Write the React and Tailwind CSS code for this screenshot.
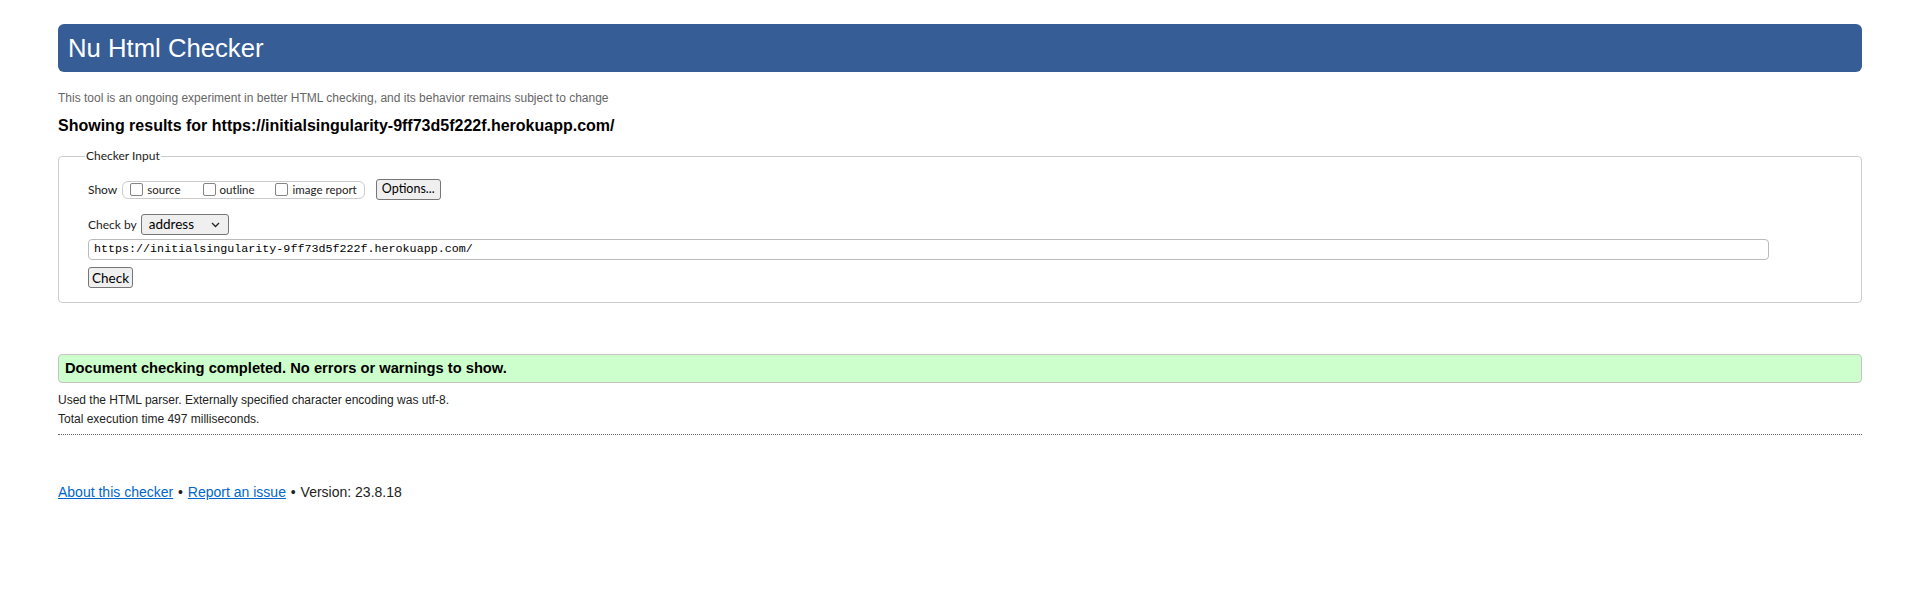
const sans = "font-['Liberation_Sans',Arial,sans-serif]";
const ui = "font-['Lato','Noto_Sans',sans-serif]";

function Box() {
  return <span className="inline-block w-[13px] h-[13px] border border-[#858585] rounded-[2px] bg-white" />;
}

function Sep() {
  return <span className="mx-[1px]">{" • "}</span>;
}

export default function App() {
  return (
    <div className={`px-[58px] pt-[24px] bg-white text-black ${sans}`}>
      <h1 className="h-[48px] bg-[#365d96] rounded-[6px] text-white text-[25.7px] pl-[10px] flex items-center">
        Nu Html Checker
      </h1>
      <p className="mt-[19px] text-[12px] leading-[14px] text-[#666]">
        This tool is an ongoing experiment in better HTML checking, and its behavior remains subject to change
      </p>
      <h2 className="mt-[11px] text-[16px] leading-[20px] font-bold">
        Showing results for https://initialsingularity-9ff73d5f222f.herokuapp.com/
      </h2>
      <fieldset className="mt-[12px] border border-[#ccc] rounded-[4px] px-[29px] pt-[15px] pb-[12px]">
        <legend className={`ml-[-3px] px-[1px] text-[12px] leading-[16px] text-[#222] ${ui}`}>Checker Input</legend>
        <div className={`flex items-center h-[21px] text-[12px] text-[#222] ${ui}`}>
          <span>Show</span>
          <div className="ml-[5px] h-[18px] flex items-center border border-[#ccc] rounded-[6px] pl-[7px] pr-[7px] text-[11.5px]">
            <Box />
            <span className="ml-[4px]">source</span>
            <span className="ml-[22px] flex"><Box /></span>
            <span className="ml-[4px]">outline</span>
            <span className="ml-[20px] flex"><Box /></span>
            <span className="ml-[5px]">image report</span>
          </div>
          <button className="ml-[11px] h-[21px] w-[65px] bg-[#efefef] border border-[#767676] rounded-[3px] text-[12.5px] text-black">
            Options...
          </button>
        </div>
        <div className={`mt-[14px] flex items-center h-[21px] text-[12px] text-[#222] ${ui}`}>
          <span>Check by</span>
          <div className="ml-[4px] h-[21px] w-[88px] flex items-center justify-between bg-[#efefef] border border-[#767676] rounded-[3px] pl-[7px] pr-[8px] text-[13.5px] text-black">
            <span>address</span>
            <svg width="9" height="6" viewBox="0 0 9 6" fill="none" stroke="#222" strokeWidth="1.3">
              <path d="M1 1l3.5 3.5L8 1" />
            </svg>
          </div>
        </div>
        <div className="mt-[4px] h-[21px] w-[1681px] flex items-center border border-[#bbb] rounded-[4px] px-[5px] font-['Liberation_Mono',monospace] text-[11.7px] text-black">
          https://initialsingularity-9ff73d5f222f.herokuapp.com/
        </div>
        <button className={`mt-[7px] h-[21px] w-[45px] bg-[#efefef] border border-[#767676] rounded-[3px] text-[13.5px] text-black ${ui}`}>
          Check
        </button>
      </fieldset>
      <div className="mt-[51px] h-[29px] flex items-center bg-[#ccffcc] border border-[#c4c4c4] rounded-[4px] pl-[6px] text-[14.7px] font-bold">
        Document checking completed. No errors or warnings to show.
      </div>
      <div className="border-b border-dotted border-[#666] pb-[6px] text-[12px] text-[#222]">
        <p className="mt-[8px] leading-[18px]">Used the HTML parser. Externally specified character encoding was utf-8.</p>
        <p className="mt-[1px] leading-[18px]">Total execution time 497 milliseconds.</p>
      </div>
      <p className="mt-[48px] text-[14px] leading-[18px] text-[#222]">
        <a href="#" className="text-[#0066cc] underline">About this checker</a>
        <Sep />
        <a href="#" className="text-[#0066cc] underline">Report an issue</a>
        <Sep />
        Version: 23.8.18
      </p>
    </div>
  );
}
